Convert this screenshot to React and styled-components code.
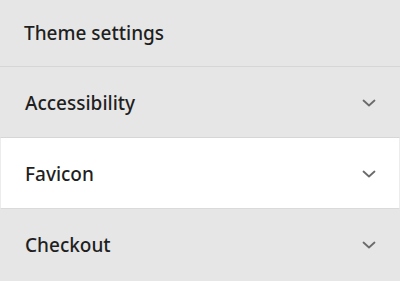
import React from 'react'
import styled, { createGlobalStyle } from 'styled-components'

const GlobalStyle = createGlobalStyle`
  html, body {
    margin: 0;
    padding: 0;
    background: #e6e6e6;
  }
  * {
    box-sizing: border-box;
  }
`

const Panel = styled.div`
  width: 400px;
  height: 281px;
  overflow: hidden;
  background: #e6e6e6;
  font-family: "Noto Sans", "Open Sans", sans-serif;
  color: #1f1f1f;
`

const Header = styled.div`
  height: 67px;
  display: flex;
  align-items: center;
  padding: 0 24px 1px;
  border-bottom: 1px solid #d6d6d6;
  font-size: 19px;
  font-weight: 500;
`

const Row = styled.div`
  height: 71px;
  display: flex;
  align-items: center;
  justify-content: space-between;
  padding: 2px 22px 0 24px;
  font-size: 19px;
  font-weight: 500;
  background: ${(p) => (p.$active ? '#ffffff' : 'transparent')};
  border: 1px solid ${(p) => (p.$active ? '#ececec' : 'transparent')};
  border-top-width: 0;
  border-bottom-color: ${(p) => (p.$active ? '#dadada' : '#d6d6d6')};

  &:last-child {
    border-bottom-color: transparent;
  }
`

const Chevron = () => (
  <svg width="16" height="16" viewBox="0 0 16 16" fill="none">
    <path d="M2.5 5.5 L8 10.5 L13.5 5.5" stroke="#6b6b6b" strokeWidth="1.8" strokeLinecap="round" strokeLinejoin="round" />
  </svg>
)

const items = [
  { label: 'Accessibility' },
  { label: 'Favicon', active: true },
  { label: 'Checkout' },
]

export default function App() {
  return (
    <>
      <GlobalStyle />
      <Panel>
        <Header>Theme settings</Header>
        {items.map((it) => (
          <Row key={it.label} $active={it.active}>
            <span>{it.label}</span>
            <Chevron />
          </Row>
        ))}
      </Panel>
    </>
  )
}
